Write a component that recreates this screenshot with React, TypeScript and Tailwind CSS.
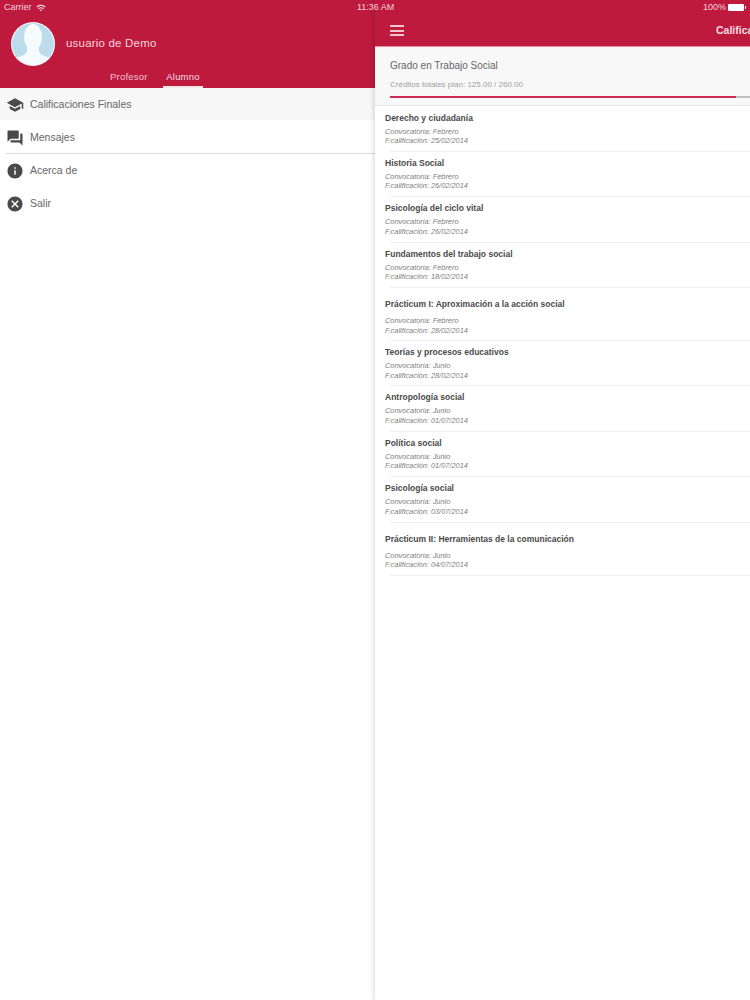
import { MdCancel, MdForum, MdInfo, MdSchool, MdWifi } from "react-icons/md";

const menu = [
  { label: "Calificaciones Finales", Icon: MdSchool, row: "h-[32px] pl-[6px] pt-[1px] bg-[#f7f7f7]" },
  { label: "Mensajes", Icon: MdForum, row: "h-[34px] ml-[6px] pt-[2px] border-b border-[#dddddd]" },
  { label: "Acerca de", Icon: MdInfo, row: "h-[33px] pl-[6px]" },
  { label: "Salir", Icon: MdCancel, row: "h-[33px] pl-[6px]" },
];

const grades = [
  { name: "Derecho y ciudadanía", call: "Febrero", date: "25/02/2014" },
  { name: "Historia Social", call: "Febrero", date: "26/02/2014" },
  { name: "Psicología del ciclo vital", call: "Febrero", date: "26/02/2014" },
  { name: "Fundamentos del trabajo social", call: "Febrero", date: "18/02/2014" },
  { name: "Prácticum I: Aproximación a la acción social", call: "Febrero", date: "28/02/2014", tall: true },
  { name: "Teorías y procesos educativos", call: "Junio", date: "28/02/2014" },
  { name: "Antropología social", call: "Junio", date: "01/07/2014" },
  { name: "Política social", call: "Junio", date: "01/07/2014" },
  { name: "Psicología social", call: "Junio", date: "03/07/2014" },
  { name: "Prácticum II: Herramientas de la comunicación", call: "Junio", date: "04/07/2014", tall: true },
];

function Avatar() {
  return (
    <svg width="44" height="44" viewBox="0 0 44 44" className="shrink-0">
      <defs>
        <clipPath id="avatar-clip">
          <circle cx="22" cy="22" r="21" />
        </clipPath>
      </defs>
      <circle cx="22" cy="22" r="22" fill="#ffffff" />
      <circle cx="22" cy="22" r="21" fill="#bcdcec" />
      <g clipPath="url(#avatar-clip)" fill="#f6fbfd">
        <ellipse cx="22" cy="15" rx="9" ry="13" />
        <path d="M16 22h12v7c0 3 5 5 11 7v9H5v-9c6-2 11-4 11-7z" />
      </g>
    </svg>
  );
}

function StatusBar() {
  return (
    <div className="absolute top-0 left-0 w-full h-[15px] flex items-center justify-between px-[4px] text-[9px] text-[#f8d5dd] z-10">
      <div className="flex items-center gap-[4px]">
        <span>Carrier</span>
        <MdWifi size={10} className="text-[#f8d5dd]" />
      </div>
      <span className="absolute left-[357px] font-medium">11:36 AM</span>
      <div className="flex items-center gap-[1px]">
        <span className="mr-[1px]">100%</span>
        <div className="w-[16px] h-[7px] bg-white rounded-[1px]" />
        <div className="w-[1px] h-[3px] bg-white" />
      </div>
    </div>
  );
}

function Sidebar() {
  return (
    <aside className="w-[375px] shrink-0 h-full bg-white">
      <header className="h-[88px] bg-[#bd1a3e] pt-[22px]">
        <div className="flex items-center pl-[11px] gap-[11px]">
          <Avatar />
          <span className="text-[11.5px] tracking-[0.2px] text-[#f8d5dd]">usuario de Demo</span>
        </div>
        <div className="flex pl-[110px] mt-[4px] text-[9.5px] tracking-[0.2px]">
          <div className="w-[53px] h-[18px] text-[#f4c2ce]">Profesor</div>
          <div className="w-[40px] h-[18px] text-center text-[#f8dbe2] border-b-2 border-[#f8e6ea]">Alumno</div>
        </div>
      </header>
      <nav>
        {menu.map(({ label, Icon, row }) => (
          <div key={label} className={"flex items-center gap-[6px] text-[10.5px] text-[#666666] " + row}>
            <Icon size={18} className="text-[#4a4a4a] shrink-0" />
            <span>{label}</span>
          </div>
        ))}
      </nav>
    </aside>
  );
}

function GradeRow({ grade }: { grade: (typeof grades)[number] }) {
  return (
    <div className={"ml-[15px] border-b border-[#eeeeee] " + (grade.tall ? "h-[53px]" : "h-[45.4px]")}>
      <div className="-ml-[5px]">
        <div className={"text-[8.5px] font-bold text-[#4a4a4a] " + (grade.tall ? "pt-[10px] h-[28px]" : "pt-[5px] h-[20px]")}>
          {grade.name}
        </div>
        <div className="text-[7.4px] leading-[9.5px] italic text-[#808080]">
          <div>Convocatoria: {grade.call}</div>
          <div>F.calificación: {grade.date}</div>
        </div>
      </div>
    </div>
  );
}

function MainPanel() {
  return (
    <main className="w-[375px] shrink-0 h-full bg-white shadow-[-2px_0_4px_rgba(0,0,0,0.12)] relative overflow-hidden">
      <header className="h-[47px] bg-[#bd1a3e] border-b border-[#e98aa0] pt-[15px] flex items-center relative">
        <div className="ml-[15px] w-[14px] flex flex-col gap-[2.5px]">
          <span className="h-[2px] bg-[#f2c4d0]" />
          <span className="h-[2px] bg-[#f2c4d0]" />
          <span className="h-[2px] bg-[#f2c4d0]" />
        </div>
        <span className="absolute left-[341px] top-[23px] text-[10.5px] font-semibold text-[#f8dbe2] whitespace-nowrap">
          Calificaciones
        </span>
      </header>
      <section className="h-[59px] bg-[#f8f8f8] border-b border-[#e8e8e8] pl-[15px] pt-[11px]">
        <div className="text-[10px] text-[#666666]">Grado en Trabajo Social</div>
        <div className="mt-[6px] text-[8px] text-[#a0a0a0]">Créditos totales plan: 125.00 / 260.00</div>
        <div className="mt-[5px] h-[2px] bg-[#c0c0c0]">
          <div className="w-[346px] h-full bg-[#cf2c54]" />
        </div>
      </section>
      <div className="pt-[0.5px]">
        {grades.map((grade) => (
          <GradeRow key={grade.name} grade={grade} />
        ))}
      </div>
    </main>
  );
}

export default function App() {
  return (
    <div className="relative w-[750px] h-[1000px] flex overflow-hidden bg-white font-['Liberation_Sans',Arial,sans-serif]">
      <StatusBar />
      <Sidebar />
      <MainPanel />
    </div>
  );
}
